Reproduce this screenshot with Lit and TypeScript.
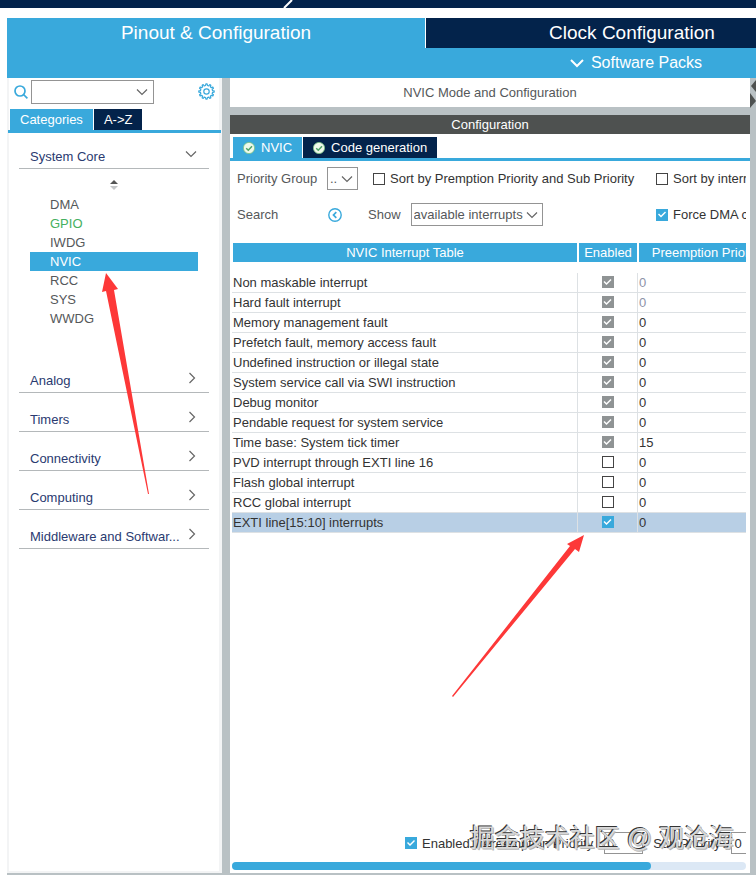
import { LitElement, html, css } from "lit";
import { customElement, property, state } from "lit/decorators.js";
import { classMap } from "lit/directives/class-map.js";

interface Interrupt {
  name: string;
  on: boolean;
  locked: boolean;
  priority: number;
  fixed?: boolean;
}

const INTERRUPTS: Interrupt[] = [
  { name: "Non maskable interrupt", on: true, locked: true, priority: 0, fixed: true },
  { name: "Hard fault interrupt", on: true, locked: true, priority: 0, fixed: true },
  { name: "Memory management fault", on: true, locked: true, priority: 0 },
  { name: "Prefetch fault, memory access fault", on: true, locked: true, priority: 0 },
  { name: "Undefined instruction or illegal state", on: true, locked: true, priority: 0 },
  { name: "System service call via SWI instruction", on: true, locked: true, priority: 0 },
  { name: "Debug monitor", on: true, locked: true, priority: 0 },
  { name: "Pendable request for system service", on: true, locked: true, priority: 0 },
  { name: "Time base: System tick timer", on: true, locked: true, priority: 15 },
  { name: "PVD interrupt through EXTI line 16", on: false, locked: false, priority: 0 },
  { name: "Flash global interrupt", on: false, locked: false, priority: 0 },
  { name: "RCC global interrupt", on: false, locked: false, priority: 0 },
  { name: "EXTI line[15:10] interrupts", on: true, locked: false, priority: 0 },
];

const CORE = ["DMA", "GPIO", "IWDG", "NVIC", "RCC", "SYS", "WWDG"];
const GROUPS = ["Analog", "Timers", "Connectivity", "Computing", "Middleware and Softwar..."];

/* Outline of a cog: each tooth is two outer points followed by two inner ones. */
const cog = (teeth: number, outer: number, inner: number): string => {
  const points: string[] = [];
  for (let i = 0; i < teeth; i++) {
    [
      [0.1, outer],
      [0.4, outer],
      [0.55, inner],
      [0.95, inner],
    ].forEach(([t, r]) => {
      const a = ((i + t - 0.25) / teeth) * Math.PI * 2 - Math.PI / 2;
      points.push(`${(Math.cos(a) * r).toFixed(2)},${(Math.sin(a) * r).toFixed(2)}`);
    });
  }
  return points.join(" ");
};

const base = css`
  * {
    box-sizing: border-box;
  }
  button,
  select,
  input {
    font: inherit;
    color: inherit;
    margin: 0;
    padding: 0;
    border: 0;
    border-radius: 0;
    background: none;
  }
  svg {
    display: block;
    flex: none;
  }
  .check {
    appearance: none;
    flex: none;
    display: block;
    width: 12px;
    height: 12px;
    border: 1px solid #444;
    background: #fff;
  }
  .check:checked {
    border: 0;
    background: #39a9dc;
  }
  .check:checked:disabled {
    background: #8f9394;
  }
  .check:checked::before {
    content: "";
    display: block;
    width: 12px;
    height: 12px;
    background: #fff;
    clip-path: polygon(2px 6px, 3px 5px, 5px 7px, 9px 3px, 10px 4px, 5px 9px);
  }
  .combo {
    display: grid;
    border: 1px solid #949494;
    background: #fff;
    align-items: center;
  }
  .combo > * {
    grid-area: 1 / 1;
  }
  .combo select {
    appearance: none;
    width: 100%;
    height: 100%;
    padding-left: 2px;
  }
  .combo svg {
    justify-self: end;
    margin-right: 4px;
    pointer-events: none;
  }
`;

const chevron = html`<svg width="12" height="8" viewBox="0 0 12 8" fill="none" stroke="#666" stroke-width="1.2">
  <path d="M1 1.5 6 6.5 11 1.5" />
</svg>`;

const okBadge = html`<svg width="12" height="12" viewBox="0 0 12 12">
  <circle cx="6" cy="6" r="5.6" fill="#eefaea" stroke="#7dc387" stroke-width=".8" />
  <path d="M3.2 6.2 5.3 8.2 9 4.2" fill="none" stroke="#4fa468" stroke-width="1.5" />
</svg>`;

@customElement("category-panel")
export class CategoryPanel extends LitElement {
  @state() private selected = "NVIC";

  static styles = [
    base,
    css`
      :host {
        display: flex;
        flex-direction: column;
        background: #fff;
        border: solid #f3f4f5;
        border-width: 0 3px 2px 2px;
        color: #55585a;
      }
      .search {
        display: flex;
        align-items: center;
        height: 31px;
        padding: 0 4px 4px 5px;
        gap: 3px;
      }
      .search .combo {
        width: 123px;
        height: 24px;
      }
      .combo svg {
        margin-right: 5px;
      }
      .gear {
        margin-left: auto;
      }
      .tabs {
        display: flex;
        gap: 1px;
        padding-left: 2px;
        margin: 0 -2px 0 -1px;
        border-bottom: 3px solid #39a9dc;
      }
      .tabs button {
        height: 21px;
        padding: 0 10px;
        background: #39a9dc;
        color: #fff;
      }
      .tabs button + button {
        background: #03234b;
      }
      .group {
        display: flex;
        align-items: center;
        justify-content: space-between;
        height: 39px;
        margin: 0 10px;
        padding: 14px 13px 0 11px;
        border-bottom: 1px solid #b4b8ba;
        color: #2a3a70;
        text-align: left;
        white-space: nowrap;
      }
      .group svg {
        margin-bottom: 4px;
      }
      .group.open {
        height: 36px;
        padding: 11px 12px 0 11px;
      }
      .sort {
        margin: 11px auto 5px;
      }
      ul {
        list-style: none;
        margin: 0 21px 26px;
        padding: 0;
      }
      .item {
        display: block;
        width: 100%;
        height: 19px;
        padding-left: 20px;
        text-align: left;
      }
      .item.green {
        color: #45b060;
      }
      .item.active {
        background: #39a9dc;
        color: #fff;
      }
    `,
  ];

  render() {
    return html`
      <div class="search">
        <svg width="14" height="14" viewBox="0 0 14 14" fill="none" stroke="#39a9dc" stroke-width="1.7">
          <circle cx="6" cy="6" r="5" />
          <path d="M9.5 9.5 13.4 13.4" />
        </svg>
        <div class="combo">
          <select aria-label="Search peripherals"></select>
          ${chevron}
        </div>
        <button class="gear" aria-label="Settings">
          <svg width="17" height="17" viewBox="-8.5 -8.500 17 17" fill="none" stroke="#39a9dc" stroke-width="1.2">
            <polygon points=${cog(12, 7.7, 6.1)} stroke-linejoin="round" />
            <circle r="2.7" />
          </svg>
        </button>
      </div>
      <div class="tabs"><button>Categories</button><button>A-&gt;Z</button></div>
      <button class="group open">System Core ${chevron}</button>
      <svg class="sort" width="8" height="10" viewBox="0 0 8 10">
        <path d="M0 4 4 0 8 4Z" fill="#555" />
        <path d="M0 6 4 10 8 6Z" fill="#c4c6c8" />
      </svg>
      <ul>
        ${CORE.map(
          (name) => html`<li>
            <button
              class=${classMap({ item: true, green: name === "GPIO", active: name === this.selected })}
              @click=${() => (this.selected = name)}
            >
              ${name}
            </button>
          </li>`,
        )}
      </ul>
      ${GROUPS.map(
        (name) => html`<button class="group">
          ${name}
          <svg width="8" height="12" viewBox="0 0 8 12" fill="none" stroke="#666" stroke-width="1.2">
            <path d="M1.5 1 6.5 6 1.5 11" />
          </svg>
        </button>`,
      )}
    `;
  }
}

@customElement("interrupt-table")
export class InterruptTable extends LitElement {
  @property({ attribute: false }) rows: Interrupt[] = [];
  @state() private current = 12;

  static styles = [
    base,
    css`
      :host {
        display: block;
        overflow: hidden;
      }
      table {
        width: calc(100% + 30px);
        table-layout: fixed;
        border-collapse: separate;
        border-spacing: 0;
      }
      .enabled {
        width: 60px;
      }
      .priority {
        width: 138px;
      }
      th {
        height: 19px;
        padding: 0;
        border: 0 solid #fff;
        border-width: 0 1px;
        background: #39a9dc;
        color: #fff;
        font-weight: normal;
        white-space: nowrap;
      }
      .spacer td {
        height: 11px;
        padding: 0;
        border: 0;
      }
      td {
        height: 20px;
        padding: 0 1px;
        border: 0 solid #dde1e4;
        border-width: 0 1px 1px 0;
        color: #333;
        line-height: 19px;
        white-space: nowrap;
      }
      td .check {
        margin: 0 auto 1px;
      }
      .fixed {
        color: #8d93a8;
      }
      .current td {
        background: #b8cfe5;
      }
    `,
  ];

  render() {
    return html`<table>
      <colgroup>
        <col />
        <col class="enabled" />
        <col class="priority" />
      </colgroup>
      <thead>
        <tr>
          <th>NVIC Interrupt Table</th>
          <th>Enabled</th>
          <th>Preemption Priority</th>
        </tr>
      </thead>
      <tbody>
        <tr class="spacer"><td colspan="3"></td></tr>
        ${this.rows.map(
          (r, i) => html`<tr class=${classMap({ current: i === this.current })} @click=${() => (this.current = i)}>
            <td>${r.name}</td>
            <td>
              <input class="check" type="checkbox" aria-label=${r.name} ?checked=${r.on} ?disabled=${r.locked} />
            </td>
            <td class=${classMap({ fixed: !!r.fixed })}>${r.priority}</td>
          </tr>`,
        )}
      </tbody>
    </table>`;
  }
}

@customElement("nvic-panel")
export class NvicPanel extends LitElement {
  static styles = [
    base,
    css`
      :host {
        display: flex;
        flex-direction: column;
        min-width: 0;
        color: #55585a;
      }
      .title {
        height: 29px;
        line-height: 29px;
        text-align: center;
        background: #fff;
      }
      .bar {
        height: 19px;
        margin-top: 8px;
        line-height: 19px;
        text-align: center;
        background: #4e5150;
        color: #fff;
      }
      .content {
        flex: 1;
        display: flex;
        flex-direction: column;
        padding-top: 3px;
        background: #fff;
      }
      .tabs {
        display: flex;
        gap: 1px;
        padding-left: 3px;
        border-bottom: 3px solid #39a9dc;
      }
      .tabs button {
        display: flex;
        align-items: center;
        gap: 6px;
        height: 21px;
        padding: 0 10px;
        background: #39a9dc;
        color: #fff;
      }
      .tabs button + button {
        background: #03234b;
      }
      .options {
        display: grid;
        grid-template-columns: 90px 46px 1fr 90px;
        grid-template-rows: 35px 37px;
        align-items: center;
        margin-right: 4px;
        padding-left: 7px;
        overflow: hidden;
        white-space: nowrap;
      }
      .combo.group {
        width: 31px;
        height: 23px;
      }
      .combo.show {
        width: 132px;
        height: 23px;
      }
      .back {
        width: 14px;
        margin-left: 1px;
      }
      .showing {
        display: flex;
        align-items: center;
        gap: 10px;
        margin-left: -5px;
      }
      .tick {
        display: flex;
        align-items: center;
        gap: 5px;
        color: #333;
        white-space: nowrap;
      }
      interrupt-table {
        flex: 1;
        margin: 10px 4px 0 2px;
      }
      .footer {
        display: flex;
        align-items: center;
        align-self: flex-end;
        width: 341px;
        margin: 0 4px 8px 0;
        overflow: hidden;
        white-space: nowrap;
        color: #333;
      }
      .footer label {
        flex: none;
      }
      .footer .preempt {
        margin-left: 13px;
      }
      .num {
        flex: none;
        width: 39px;
        height: 22px;
        margin: 0 10px 0 11px;
        padding-left: 2px;
        border: 1px solid #949494;
      }
      .scroll {
        height: 8px;
        margin: 0 4px 3px 2px;
        border-radius: 4px;
        background: #dce8f5;
      }
      .thumb {
        width: 419px;
        height: 8px;
        border-radius: 4px;
        background: #39a9dc;
      }
    `,
  ];

  render() {
    return html`
      <div class="title">NVIC Mode and Configuration</div>
      <div class="bar">Configuration</div>
      <div class="content">
        <div class="tabs"><button>${okBadge} NVIC</button><button>${okBadge} Code generation</button></div>
        <div class="options">
          <label for="group">Priority Group</label>
          <div class="combo group">
            <select id="group">
              <option>..</option>
            </select>
            ${chevron}
          </div>
          <label class="tick"><input class="check" type="checkbox" />Sort by Premption Priority and Sub Priority</label>
          <label class="tick"><input class="check" type="checkbox" />Sort by interrupts names</label>
          <span>Search</span>
          <button class="back" aria-label="Previous match">
            <svg width="14" height="14" viewBox="0 0 14 14" fill="none" stroke="#39a9dc" stroke-width="1.4">
              <circle cx="7" cy="7" r="6.2" />
              <path d="M8.3 4.2 5.5 7 8.3 9.8" stroke-width="1.7" />
            </svg>
          </button>
          <div class="showing">
            <label for="show">Show</label>
            <div class="combo show">
              <select id="show">
                <option>available interrupts</option>
              </select>
              ${chevron}
            </div>
          </div>
          <label class="tick"><input class="check" type="checkbox" checked />Force DMA channels Interrupts</label>
        </div>
        <interrupt-table .rows=${INTERRUPTS}></interrupt-table>
        <div class="footer">
          <label class="tick"><input class="check" type="checkbox" checked />Enabled</label>
          <label class="preempt" for="preempt">Preemption Priority</label>
          <input class="num" id="preempt" value="0" />
          <label for="sub">Sub Priority</label>
          <input class="num" id="sub" value="0" />
        </div>
        <div class="scroll"><div class="thumb"></div></div>
      </div>
    `;
  }
}

@customElement("app-root")
export class AppRoot extends LitElement {
  static styles = [
    base,
    css`
      :host {
        position: relative;
        display: flex;
        flex-direction: column;
        min-height: 100vh;
        padding-bottom: 1px;
        overflow: hidden;
        background: #fff;
        font: 13px/19px "Liberation Sans", Arial, sans-serif;
      }
      .crumbs {
        height: 8px;
        margin-bottom: 10px;
        padding-left: 282px;
        background: #03234b;
      }
      .header {
        display: grid;
        grid-template-columns: 418px minmax(412px, 1fr);
        grid-template-rows: 30px 30px;
        column-gap: 1px;
        margin-left: 7px;
        background: #39a9dc;
        color: #fff;
      }
      .header button {
        font-size: 19px;
        line-height: 30px;
      }
      .clock {
        background: #03234b;
        box-shadow: -1px 0 #fff;
      }
      .header .packs {
        display: flex;
        align-items: center;
        justify-content: center;
        grid-column: 2;
        gap: 7px;
        padding-left: 8px;
        font-size: 16px;
      }
      .body {
        flex: 1;
        display: grid;
        grid-template-columns: 215px minmax(0, 1fr) 6px;
        margin-left: 7px;
        border-bottom: 2px solid #b9c1c4;
        background: #b9c1c4;
      }
      nvic-panel {
        margin-left: 8px;
      }
      .arrows {
        position: absolute;
        left: 0;
        top: 0;
        pointer-events: none;
      }
      .mark {
        position: absolute;
        right: 22px;
        bottom: 20px;
        font: 25px/36px "Liberation Sans", "Noto Sans CJK SC", sans-serif;
        color: #d8d8d8;
        text-shadow:
          -1px -1px #333,
          1px 1px #b4b4b4;
        white-space: nowrap;
        pointer-events: none;
      }
    `,
  ];

  render() {
    return html`
      <div class="crumbs">
        <svg width="12" height="8" viewBox="0 0 12 8">
          <path d="M2 8 10 0" stroke="#fff" stroke-width="2" />
        </svg>
      </div>
      <div class="header">
        <button>Pinout &amp; Configuration</button>
        <button class="clock">Clock Configuration</button>
        <button class="packs">
          <svg width="14" height="10" viewBox="0 0 14 10" fill="none" stroke="#fff" stroke-width="2">
            <path d="M1 2 7 8 13 2" />
          </svg>
          Software Packs
        </button>
      </div>
      <div class="body">
        <category-panel></category-panel>
        <nvic-panel></nvic-panel>
        <svg width="6" height="38" viewBox="0 0 6 38" fill="#4e5150">
          <path d="M6 2 1 8 6 14Z" />
          <path d="M0 15 6 23 0 30Z" />
        </svg>
      </div>
      <svg class="arrows" width="756" height="875" viewBox="0 0 756 875" fill="#fd3838">
        <path d="M106 273 118 289 114 290 149 494 148 494 106 291 102 292Z" />
        <path d="M584 535 579 552 575 549 453 697 452 696 570 546 567 544Z" />
      </svg>
      <div class="mark">掘金技术社区 @ 观沧海</div>
    `;
  }
}
